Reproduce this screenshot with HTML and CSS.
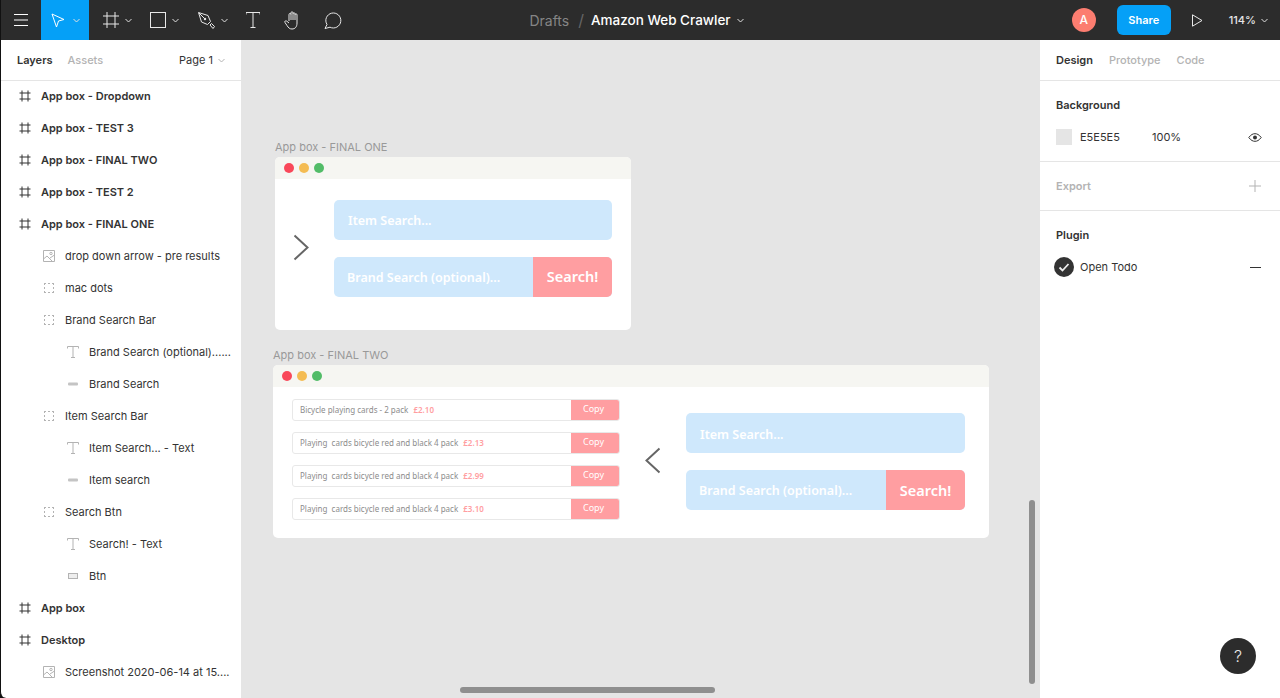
FILE: index.html
```html
<!DOCTYPE html>
<html lang="en">
<head>
  <meta charset="UTF-8" />
  <title>Amazon Web Crawler</title>
  <link rel="stylesheet" href="styles.css">
</head>
<body>
  <svg class="sprites" width="0" height="0">
    <symbol id="i-frame" viewBox="0 0 12 12"><path d="M3 .5v11M9 .5v11M.5 3h11M.5 9h11" fill="none" stroke="#333" /></symbol>
    <symbol id="i-image" viewBox="0 0 12 12"><path d="M.5.5h11v11H.5zM.5 9l3.500-3 5.500 5.500M7 8l4.500-3" fill="none" stroke="#b3b3b3" /><circle cx="8" cy="3.500" r="1.200" fill="none" stroke="#b3b3b3" /></symbol>
    <symbol id="i-group" viewBox="0 0 12 12"><path d="M1 1.500h10M1 10.500h10M1.500 1v10M10.500 1v10" fill="none" stroke="#b3b3b3" stroke-dasharray="2 2" /></symbol>
    <symbol id="i-text" viewBox="0 0 12 12"><path d="M.5 2.500v-2h11v2M6 .5v11M4 11.500h4" fill="none" stroke="#b3b3b3" /></symbol>
    <symbol id="i-line" viewBox="0 0 12 12"><rect x="1" y="4.500" width="10" height="3" rx="1" fill="#c4c4c4" /></symbol>
    <symbol id="i-rect" viewBox="0 0 12 12"><rect x="1.500" y="3.500" width="9" height="5" fill="#eee" stroke="#b3b3b3" /></symbol>
    <symbol id="i-chev" viewBox="0 0 7 5"><path d="M.5 1l3 3 3-3" fill="none" stroke="currentColor" /></symbol>
  </svg>

  <header class="topbar">
    <div class="tools">
      <button class="tool tool-menu">
        <svg width="14" height="12" viewBox="0 0 14 12"><path d="M0 .5h14M0 6h14M0 11.500h14" stroke="#fff" /></svg>
      </button>
      <button class="tool tool-move">
        <svg width="14" height="15" viewBox="0 0 14 15"><path d="M1 1l12 5.500-5.500 1.500-2 6z" fill="none" stroke="#fff" /></svg>
        <svg class="chev" width="7" height="5"><use href="#i-chev" /></svg>
      </button>
      <button class="tool tool-drop">
        <svg width="16" height="16" viewBox="0 0 16 16"><path d="M4 0v16M12 0v16M0 4h16M0 12h16" fill="none" stroke="#e8e8e8" /></svg>
        <svg class="chev" width="7" height="5"><use href="#i-chev" /></svg>
      </button>
      <button class="tool tool-drop">
        <svg width="16" height="16" viewBox="0 0 16 16"><rect x=".5" y=".5" width="15" height="15" fill="none" stroke="#e8e8e8" /></svg>
        <svg class="chev" width="7" height="5"><use href="#i-chev" /></svg>
      </button>
      <button class="tool tool-drop tool-pen">
        <svg width="17" height="17" viewBox="0 0 17 17"><path d="M.5.500l9.500 3 2.500 6-3 3-6-2.500zM12 13l1.500-1.500 3 3-1.500 2zM1 1l5 5" fill="none" stroke="#e8e8e8" /><circle cx="7" cy="7" r="1.200" fill="#e8e8e8" /></svg>
        <svg class="chev" width="7" height="5"><use href="#i-chev" /></svg>
      </button>
      <button class="tool tool-plain">
        <svg width="14" height="16" viewBox="0 0 14 16"><path d="M0 2.500v-2h14v2M7 .5v15M4.500 15.500h5" fill="none" stroke="#e8e8e8" /></svg>
      </button>
      <button class="tool tool-plain">
        <svg width="18" height="19" viewBox="0 0 18 19"><path d="M5 10V3.500a1 1 0 0 1 2 0V1.800a1 1 0 0 1 2 0v1a1 1 0 0 1 2 0v1a1 1 0 0 1 2 0V12c0 4-2 6-5 6-2.500 0-3.500-1.200-5-3.500L1 11.500c-.8-1.300.8-2.300 1.800-1.300L5 12M7 3.500V9M9 2.800V9M11 3.800V9" fill="none" stroke="#e8e8e8" /></svg>
      </button>
      <button class="tool tool-plain">
        <svg width="18" height="17" viewBox="0 0 18 17"><path d="M1 16.500l2-4A7.500 7.500 0 1 1 6 15.200z" fill="none" stroke="#e8e8e8" /></svg>
      </button>
    </div>
    <div class="crumbs">
      <span class="crumb-dim">Drafts</span>
      <span class="crumb-sep">/</span>
      <span class="crumb-name">Amazon Web Crawler</span>
      <svg class="chev" width="7" height="5"><use href="#i-chev" /></svg>
    </div>
    <div class="actions">
      <span class="avatar">A</span>
      <button class="share">Share</button>
      <svg class="play" width="11" height="13" viewBox="0 0 11 13"><path d="M.5.800l9.500 5.700-9.500 5.700z" fill="none" stroke="#e8e8e8" /></svg>
      <span class="zoom">114%</span>
      <svg class="chev" width="7" height="5"><use href="#i-chev" /></svg>
    </div>
  </header>

  <div class="workspace">
    <aside class="left">
      <div class="tabs">
        <span class="tab active">Layers</span>
        <span class="tab">Assets</span>
        <span class="page">Page 1 <svg class="chev" width="7" height="5"><use href="#i-chev" /></svg></span>
      </div>
      <ul class="layers">
        <li class="layer top"><svg width="12" height="12"><use href="#i-frame" /></svg>App box - Dropdown</li>
        <li class="layer top"><svg width="12" height="12"><use href="#i-frame" /></svg>App box - TEST 3</li>
        <li class="layer top"><svg width="12" height="12"><use href="#i-frame" /></svg>App box - FINAL TWO</li>
        <li class="layer top"><svg width="12" height="12"><use href="#i-frame" /></svg>App box - TEST 2</li>
        <li class="layer top"><svg width="12" height="12"><use href="#i-frame" /></svg>App box - FINAL ONE</li>
        <li class="layer sub"><svg width="12" height="12"><use href="#i-image" /></svg>drop down arrow - pre results</li>
        <li class="layer sub"><svg width="12" height="12"><use href="#i-group" /></svg>mac dots</li>
        <li class="layer sub"><svg width="12" height="12"><use href="#i-group" /></svg>Brand Search Bar</li>
        <li class="layer leaf"><svg width="12" height="12"><use href="#i-text" /></svg>Brand Search (optional)......</li>
        <li class="layer leaf"><svg width="12" height="12"><use href="#i-line" /></svg>Brand Search</li>
        <li class="layer sub"><svg width="12" height="12"><use href="#i-group" /></svg>Item Search Bar</li>
        <li class="layer leaf"><svg width="12" height="12"><use href="#i-text" /></svg>Item Search... - Text</li>
        <li class="layer leaf"><svg width="12" height="12"><use href="#i-line" /></svg>Item search</li>
        <li class="layer sub"><svg width="12" height="12"><use href="#i-group" /></svg>Search Btn</li>
        <li class="layer leaf"><svg width="12" height="12"><use href="#i-text" /></svg>Search! - Text</li>
        <li class="layer leaf"><svg width="12" height="12"><use href="#i-rect" /></svg>Btn</li>
        <li class="layer top"><svg width="12" height="12"><use href="#i-frame" /></svg>App box</li>
        <li class="layer top"><svg width="12" height="12"><use href="#i-frame" /></svg>Desktop</li>
        <li class="layer sub"><svg width="12" height="12"><use href="#i-image" /></svg>Screenshot 2020-06-14 at 15....</li>
      </ul>
    </aside>

    <main class="canvas">
      <div class="frame-label label-one">App box - FINAL ONE</div>
      <section class="appbox box-one">
        <div class="titlebar"><i class="dot red"></i><i class="dot amber"></i><i class="dot green"></i></div>
        <div class="appbody body-one">
          <svg class="arrow" width="16" height="27" viewBox="0 0 16 27"><path d="M1.500 1.500l13 12-13 12" fill="none" stroke="#666" stroke-width="2" /></svg>
          <div class="searches">
            <div class="field">Item Search...</div>
            <div class="field brand"><span class="brand-text">Brand Search (optional)...</span><span class="go">Search!</span></div>
          </div>
        </div>
      </section>

      <div class="frame-label label-two">App box - FINAL TWO</div>
      <section class="appbox box-two">
        <div class="titlebar"><i class="dot red"></i><i class="dot amber"></i><i class="dot green"></i></div>
        <div class="appbody body-two">
          <div class="results">
            <div class="result"><span class="result-text">Bicycle playing cards - 2 pack <b>£2.10</b></span><span class="copy">Copy</span></div>
            <div class="result"><span class="result-text">Playing &nbsp;cards bicycle red and black 4 pack <b>£2.13</b></span><span class="copy">Copy</span></div>
            <div class="result"><span class="result-text">Playing &nbsp;cards bicycle red and black 4 pack <b>£2.99</b></span><span class="copy">Copy</span></div>
            <div class="result"><span class="result-text">Playing &nbsp;cards bicycle red and black 4 pack <b>£3.10</b></span><span class="copy">Copy</span></div>
          </div>
          <svg class="arrow" width="16" height="27" viewBox="0 0 16 27"><path d="M14.500 1.500l-13 12 13 12" fill="none" stroke="#666" stroke-width="2" /></svg>
          <div class="searches">
            <div class="field">Item Search...</div>
            <div class="field brand"><span class="brand-text">Brand Search (optional)...</span><span class="go">Search!</span></div>
          </div>
        </div>
      </section>

      <div class="scroll-v"></div>
      <div class="scroll-h"></div>
    </main>

    <aside class="right">
      <div class="tabs tabs-right">
        <span class="tab active">Design</span>
        <span class="tab">Prototype</span>
        <span class="tab">Code</span>
      </div>
      <div class="panel panel-bg">
        <h3>Background</h3>
        <div class="prop">
          <span class="swatch"></span>
          <span class="hex">E5E5E5</span>
          <span class="pct">100%</span>
          <svg class="end" width="14" height="9" viewBox="0 0 14 9"><path d="M.8 4.500C3 1.500 5 .7 7 .7s4 .8 6.200 3.800C11 7.500 9 8.300 7 8.300S3 7.500.8 4.500z" fill="none" stroke="#333" /><circle cx="7" cy="4.500" r="2" fill="#333" /></svg>
        </div>
      </div>
      <div class="panel panel-export">
        <h3 class="muted">Export</h3>
        <svg class="end" width="12" height="12" viewBox="0 0 12 12"><path d="M6 0v12M0 6h12" stroke="#b3b3b3" /></svg>
      </div>
      <div class="panel panel-plugin">
        <h3>Plugin</h3>
        <div class="prop plugin-row">
          <svg class="check" width="20" height="20" viewBox="0 0 20 20"><circle cx="10" cy="10" r="10" fill="#333" /><path d="M5.500 10.500l3 3 6-6.500" fill="none" stroke="#eee" stroke-width="1.800" /></svg>
          <span class="plugin-name">Open Todo</span>
          <svg class="end" width="11" height="1" viewBox="0 0 11 1"><path d="M0 .5h11" stroke="#333" /></svg>
        </div>
      </div>
      <button class="help">?</button>
    </aside>
  </div>
</body>
</html>
```

FILE: styles.css
```css
* {
  box-sizing: border-box;
}
html, body {
  margin: 0;
  height: 100%;
}
body {
  width: 1280px;
  height: 698px;
  overflow: hidden;
  display: flex;
  flex-direction: column;
  font-family: Inter, "Liberation Sans", sans-serif;
  font-size: 11px;
  color: #333;
  background: #e5e5e5;
}
button {
  border: none;
  background: none;
  padding: 0;
  font: inherit;
  color: inherit;
}
.sprites {
  position: absolute;
}
.chev {
  color: #e0e0e0;
  flex: none;
}

/* top bar */
.topbar {
  height: 40px;
  flex: none;
  background: #2c2c2c;
  color: #fff;
  display: grid;
  grid-template-columns: 1fr auto 1fr;
  align-items: center;
  border-left: 1px solid #111;
}
.tools, .actions, .crumbs, .tool {
  display: flex;
  align-items: center;
}
.tool {
  height: 40px;
  justify-content: center;
}
.tool-menu {
  width: 40px;
}
.tool-move {
  width: 48px;
  background: #05a0f7;
  gap: 8px;
}
.tool-drop {
  width: 47px;
  gap: 6px;
  justify-content: flex-start;
  padding-left: 14px;
}
.tool-pen {
  width: 50px;
  padding-left: 15px;
}
.tool-plain {
  width: 40px;
}
.crumbs {
  gap: 8px;
  font-size: 13px;
  margin-left: -8px;
}
.crumb-dim {
  color: #858585;
  font-size: 14px;
}
.crumb-sep {
  color: #666;
  font-size: 16px;
  margin: 0 -1px 0 1px;
}
.crumb-name {
  font-weight: 500;
  font-size: 13.500px;
  margin-right: -2px;
}
.actions {
  justify-content: flex-end;
  padding-right: 12px;
}
.avatar {
  width: 24px;
  height: 24px;
  border-radius: 50%;
  background: #fc7d70;
  text-align: center;
  line-height: 24px;
  font-size: 12px;
  font-weight: 500;
}
.share {
  width: 54px;
  height: 30px;
  margin-left: 21px;
  background: #05a0f7;
  border-radius: 6px;
  color: #fff;
  font-weight: 600;
}
.play {
  margin-left: 21px;
}
.zoom {
  margin-left: 26px;
  margin-right: 5px;
  font-weight: 500;
  color: #e6e6e6;
}

/* panels */
.workspace {
  flex: 1;
  min-height: 0;
  display: flex;
  background: #111;
}
.left {
  width: 241px;
  flex: none;
  background: #fff;
  border-left: 1px solid #111;
  border-bottom-left-radius: 6px;
  overflow: hidden;
}
.right {
  width: 240px;
  flex: none;
  background: #fff;
  position: relative;
}
.tabs {
  height: 41px;
  display: flex;
  align-items: center;
  gap: 15px;
  padding-left: 16px;
  border-bottom: 1px solid #e5e5e5;
}
.tab {
  font-weight: 500;
  color: #b3b3b3;
}
.tab.active {
  font-weight: 600;
  color: #333;
}
.page {
  margin-left: auto;
  margin-right: 16px;
  display: flex;
  align-items: center;
  gap: 5px;
}
.page .chev {
  color: #b3b3b3;
}
.layers {
  list-style: none;
  margin: -1px 0 0;
  padding: 0;
}
.layer {
  height: 32px;
  display: flex;
  align-items: center;
  gap: 10px;
  white-space: nowrap;
}
.layer svg {
  flex: none;
}
.top {
  padding-left: 18px;
  font-weight: 600;
}
.sub {
  padding-left: 42px;
}
.leaf {
  padding-left: 66px;
}

/* canvas */
.canvas {
  flex: 1;
  position: relative;
  background: #e5e5e5;
}
.frame-label {
  position: absolute;
  color: #999;
  font-size: 11px;
  line-height: 14px;
  white-space: nowrap;
}
.label-one {
  left: 34px;
  top: 100px;
}
.label-two {
  left: 32px;
  top: 308px;
}
.appbox {
  position: absolute;
  background: #fff;
  border-radius: 5px;
  overflow: hidden;
  font-family: "Noto Sans", sans-serif;
}
.box-one {
  left: 34px;
  top: 117px;
  width: 356px;
  height: 173px;
}
.box-two {
  left: 32px;
  top: 325px;
  width: 716px;
  height: 173px;
}
.titlebar {
  height: 22px;
  background: #f6f6f2;
  display: flex;
  align-items: center;
  gap: 5px;
  padding-left: 9px;
}
.dot {
  width: 10px;
  height: 10px;
  border-radius: 50%;
}
.red {
  background: #f9485a;
}
.amber {
  background: #f4bc53;
}
.green {
  background: #52bc68;
}
.appbody {
  display: flex;
  align-items: flex-start;
}
.body-one {
  padding: 21px 0 0 18px;
}
.body-one .arrow {
  margin-top: 34px;
  margin-right: 25px;
}
.body-one .searches {
  width: 278px;
}
.body-two {
  padding: 12px 0 0 19px;
}
.body-two .arrow {
  margin: 48px 25px 0 25px;
}
.body-two .searches {
  margin-top: 14px;
}
.searches {
  width: 279px;
  display: flex;
  flex-direction: column;
  gap: 17px;
}
.field {
  height: 40px;
  background: #cfe8fc;
  border-radius: 5px;
  color: #fff;
  font-weight: 600;
  font-size: 12.500px;
  line-height: 42px;
  padding-left: 14px;
  overflow: hidden;
  white-space: nowrap;
}
.body-two .field {
  line-height: 44px;
}
.body-two .brand {
  line-height: 42px;
}
.brand {
  display: flex;
  padding-left: 0;
}
.brand-text {
  flex: 1;
  padding-left: 13px;
}
.go {
  width: 79px;
  background: #ff9ea1;
  text-align: center;
  font-size: 14.500px;
  line-height: 38px;
}
.body-two .go {
  line-height: 40px;
}
.results {
  width: 328px;
  display: flex;
  flex-direction: column;
  gap: 11px;
}
.result {
  height: 22px;
  display: flex;
  border: 1px solid #e8e8e8;
  border-radius: 3px;
  overflow: hidden;
  font-size: 8px;
  line-height: 20px;
  white-space: nowrap;
  color: #8c8c8c;
}
.result-text {
  flex: 1;
  padding-left: 7px;
}
.result-text b {
  color: #ff9ea1;
  font-weight: 600;
  margin-left: 3px;
}
.copy {
  width: 49px;
  margin: -1px -1px -1px 0;
  padding-right: 4px;
  background: #ff9ea1;
  color: #fff;
  text-align: center;
  font-size: 9px;
  line-height: 19px;
}
.scroll-v {
  position: absolute;
  right: 5px;
  top: 460px;
  width: 6px;
  height: 184px;
  border-radius: 3px;
  background: #8f8f8f;
}
.scroll-h {
  position: absolute;
  left: 219px;
  top: 647px;
  width: 255px;
  height: 6px;
  border-radius: 3px;
  background: #8f8f8f;
}

/* right panel */
.tabs-right {
  gap: 16px;
}
.panel {
  padding: 0 16px;
  border-bottom: 1px solid #e5e5e5;
  position: relative;
}
.panel h3 {
  margin: 0;
  font-size: 11px;
  font-weight: 600;
  line-height: 14px;
}
.panel-bg {
  height: 81px;
  padding-top: 17px;
}
.panel-bg .end {
  margin-right: 2px;
}
.panel-export {
  height: 49px;
  padding-top: 17px;
  display: flex;
  justify-content: space-between;
  align-items: flex-start;
}
.panel-plugin {
  border-bottom: none;
  padding-top: 17px;
}
.panel h3.muted {
  color: #b3b3b3;
}
.panel-export .end {
  margin: 1px 3px 0 0;
}
.prop {
  display: flex;
  align-items: center;
  height: 16px;
  margin-top: 17px;
}
.swatch {
  width: 16px;
  height: 16px;
  background: #e5e5e5;
  margin-right: 8px;
}
.hex {
  width: 72px;
}
.end {
  margin-left: auto;
}
.plugin-row {
  margin-top: 17px;
}
.plugin-row .end {
  margin-right: 3px;
}
.check {
  margin-left: -2px;
  margin-right: 6px;
}
.help {
  position: absolute;
  right: 24px;
  bottom: 24px;
  width: 36px;
  height: 36px;
  border-radius: 50%;
  background: #2c2c2c;
  color: #e8e8e8;
  font-size: 16px;
  font-weight: 300;
}
```
